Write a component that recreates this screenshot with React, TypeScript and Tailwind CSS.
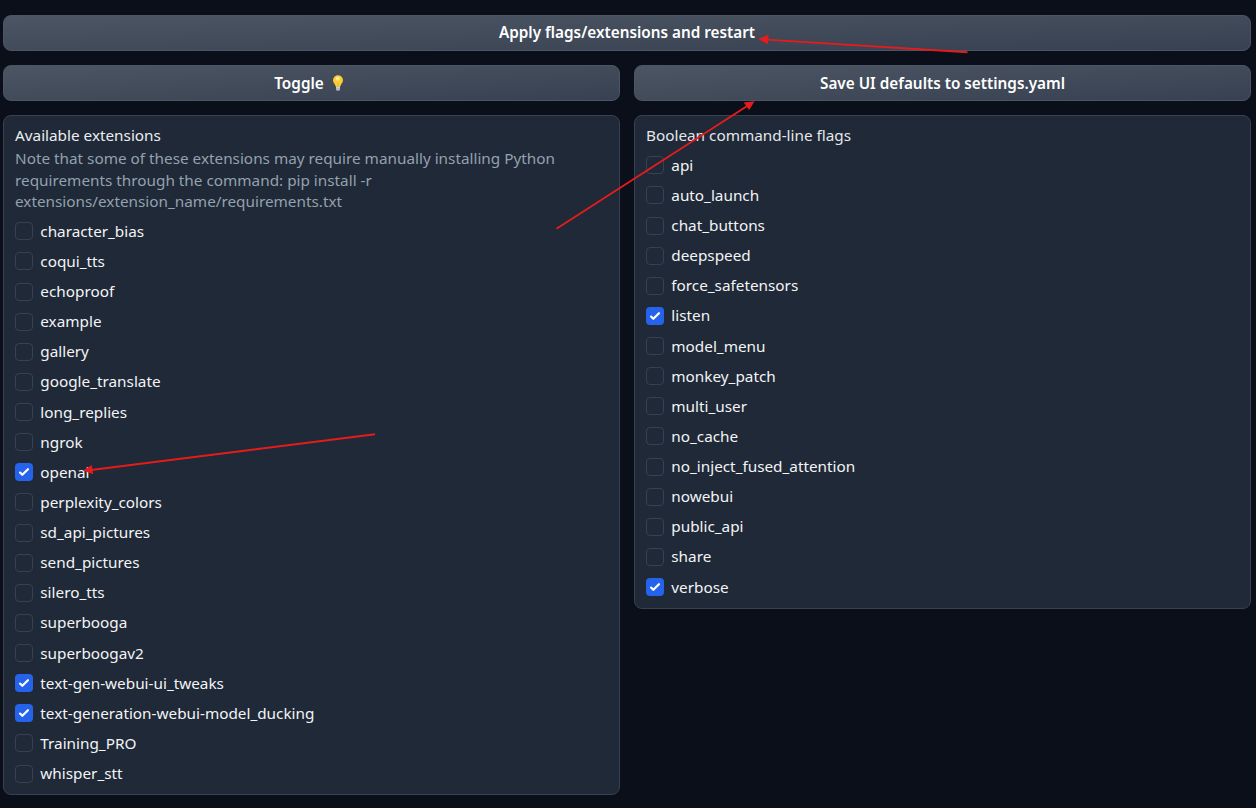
const extensions = [
  "character_bias", "coqui_tts", "echoproof", "example", "gallery", "google_translate", "long_replies",
  "ngrok", "openai", "perplexity_colors", "sd_api_pictures", "send_pictures", "silero_tts", "superbooga",
  "superboogav2", "text-gen-webui-ui_tweaks", "text-generation-webui-model_ducking", "Training_PRO", "whisper_stt",
];
const flags = [
  "api", "auto_launch", "chat_buttons", "deepspeed", "force_safetensors", "listen", "model_menu",
  "monkey_patch", "multi_user", "no_cache", "no_inject_fused_attention", "nowebui", "public_api", "share", "verbose",
];
const enabled = new Set([
  "openai", "text-gen-webui-ui_tweaks", "text-generation-webui-model_ducking", "listen", "verbose",
]);

function Button({ children }: { children: React.ReactNode }) {
  return (
    <button className="flex h-9 w-full items-center justify-center rounded-lg border border-[#4b5563] bg-[linear-gradient(to_bottom_right,#4b5563,#374151)] text-[15.3px] font-semibold text-white">
      {children}
    </button>
  );
}

function Option({ name }: { name: string }) {
  return (
    <label className="flex h-[30.125px] items-center">
      {enabled.has(name) ? (
        <span className="size-[18px] shrink-0 rounded bg-[#2563eb]">
          <svg viewBox="0 0 16 16" className="size-[18px]" fill="white">
            <path d="M12.207 4.793a1 1 0 010 1.414l-5 5a1 1 0 01-1.414 0l-2-2a1 1 0 011.414-1.414L6.5 9.086l4.293-4.293a1 1 0 011.414 0z" />
          </svg>
        </span>
      ) : (
        <span className="size-[18px] shrink-0 rounded border border-[#374151] bg-[#1f2937]" />
      )}
      <span className="ml-[7.3px] pb-px leading-[22px]">{name}</span>
    </label>
  );
}

function Bulb() {
  return (
    <svg width="14" height="18" viewBox="0 0 14 18" className="mr-1 ml-[7px]">
      <path d="M5 12h4v3.2a2 1.500 0 0 1-4 0z" fill="#b4b8bd" />
      <path d="M5 13.6h4" stroke="#d9dce0" strokeWidth=".7" />
      <path d="M7 1.3a5 5 0 0 0-5 5c0 2.600 2.200 3.500 2.700 6.300h4.600C9.800 9.800 12 8.900 12 6.300a5 5 0 0 0-5-5z" fill="#fdcb34" />
      <path d="M7 8.500v3.800" stroke="#f2b233" strokeWidth=".9" fill="none" />
      <ellipse cx="6.700" cy="4.800" rx="2.100" ry="2" fill="#fff08c" />
    </svg>
  );
}

export default function App() {
  return (
    <main className="relative flex h-[808px] w-[1256px] flex-col gap-3.5 overflow-hidden bg-[#0b0f19] pt-[15px] pr-[5px] pl-[3px] font-['Noto_Sans',sans-serif] text-[15.3px] text-[#f3f4f6]">
      <Button><span className="pb-px">Apply flags/extensions and restart</span></Button>
      <div className="grid grid-cols-2 gap-3.5">
        <Button>Toggle <Bulb /></Button>
        <Button>Save UI defaults to settings.yaml</Button>
      </div>
      <div className="grid grid-cols-2 items-start gap-3.5">
        <section className="h-[680px] rounded-lg border border-[#374151] bg-[#1f2937] px-[11px] pt-2">
          <h2 className="mb-0.5 leading-[22px] text-[#eceef1]">Available extensions</h2>
          <p className="mb-[3.75px] leading-[21.5px] text-[#94a1ae]">
            Note that some of these extensions may require manually installing Python<br />
            requirements through the command: pip install -r<br />
            extensions/extension_name/requirements.txt
          </p>
          {extensions.map((name) => <Option key={name} name={name} />)}
        </section>
        <section className="h-[494px] rounded-lg border border-[#374151] bg-[#1f2937] px-[11px] pt-2">
          <h2 className="mb-[4.25px] leading-[22px] text-[#e5e7eb]">Boolean command-line flags</h2>
          {flags.map((name) => <Option key={name} name={name} />)}
        </section>
      </div>
      <svg className="pointer-events-none absolute inset-0" width="1256" height="808" fill="#e51c1c" stroke="#e51c1c">
        <path d="M967.500 52.300 766 39.600M556.500 228.800 748 105.500M375 434.300 91 470" fill="none" strokeWidth="1.900" />
        <path d="M758 39 768.500 34.800 767.800 44.200ZM754.500 101.300 743.700 102.400 749.200 110ZM83 470.600 91.800 465 93.200 474.200Z" stroke="none" />
      </svg>
    </main>
  );
}
